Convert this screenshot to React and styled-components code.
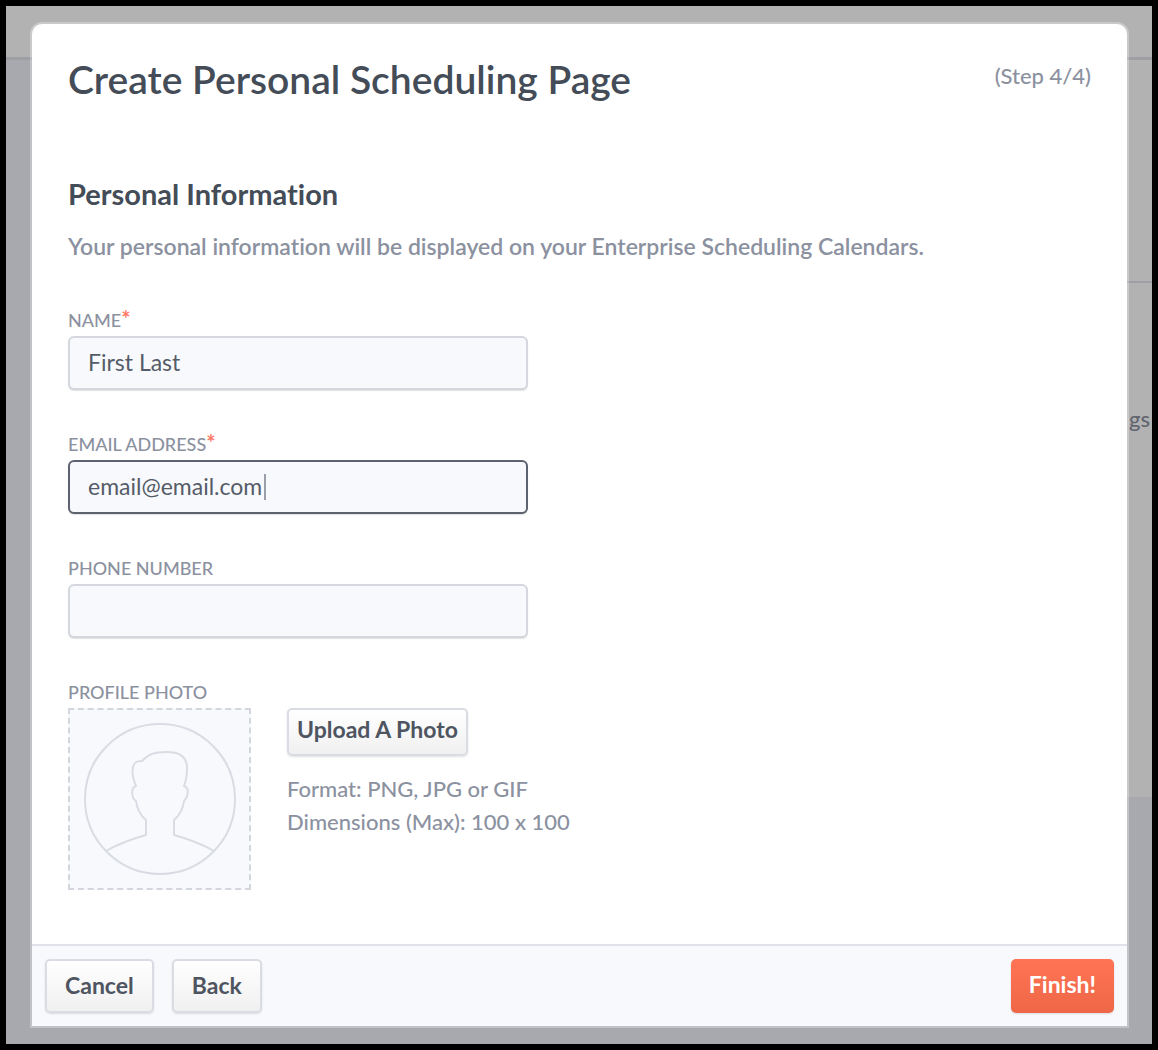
import React, { Component } from 'react';
import styled, { createGlobalStyle, css } from 'styled-components';

export default class App extends Component {
  state = {
    name: 'First Last',
    email: 'email@email.com',
    phone: ''
  };

  onChange = e => {
    const { name, value } = e.target;

    this.setState({ [name]: value });
  };

  onSubmit = e => {
    e.preventDefault();
  };

  render() {
    const { name, email, phone } = this.state;

    return (
      <Frame>
        <GlobalStyle />
        <Backdrop>
          <TopBar />
          <Columns>
            <Panel>
              <PanelHeader />
              <PanelText>gs</PanelText>
            </Panel>
          </Columns>
        </Backdrop>
        <Overlay>
          <Modal role="dialog" aria-labelledby="modal-title" onSubmit={this.onSubmit}>
            <Body>
              <Header>
                <Title id="modal-title">Create Personal Scheduling Page</Title>
                <Step>(Step 4/4)</Step>
              </Header>
              <Subtitle>Personal Information</Subtitle>
              <Lead>Your personal information will be displayed on your Enterprise Scheduling Calendars.</Lead>

              <Field>
                <Label htmlFor="name">NAME<Required>*</Required></Label>
                <Input id="name" name="name" value={name} onChange={this.onChange} />
              </Field>
              <Field>
                <Label htmlFor="email">EMAIL ADDRESS<Required>*</Required></Label>
                <InputWrap>
                  <Input id="email" name="email" value={email} onChange={this.onChange} $active />
                  <Caret />
                </InputWrap>
              </Field>
              <Field>
                <Label htmlFor="phone">PHONE NUMBER</Label>
                <Input id="phone" name="phone" value={phone} onChange={this.onChange} />
              </Field>

              <Label as="div">PROFILE PHOTO</Label>
              <Photo>
                <PhotoBox>
                  <Avatar />
                </PhotoBox>
                <div>
                  <UploadBtn type="button">Upload A Photo</UploadBtn>
                  <Hint>Format: PNG, JPG or GIF</Hint>
                  <Hint>Dimensions (Max): 100 x 100</Hint>
                </div>
              </Photo>
            </Body>
            <Footer>
              <Actions>
                <Btn type="button">Cancel</Btn>
                <Btn type="button">Back</Btn>
              </Actions>
              <PrimaryBtn type="submit">Finish!</PrimaryBtn>
            </Footer>
          </Modal>
        </Overlay>
      </Frame>
    );
  }
}

const Avatar = () => (
  <svg width="152" height="152" viewBox="0 0 152 152" fill="none" stroke="#d9dce2" strokeWidth="2" strokeLinejoin="round">
    <circle cx="76" cy="76" r="75" />
    <path d="M22 128C34 121 48 116 62 112V97C56 92 53 86 52 78C48 76 46 65 52 63C49 56 48 49 49 44C50 39 53 38 58 38C64 31 71 29 83 29C96 29 103 34 103 45C103 52 102 58 100 63C106 65 104 74 100 78C99 86 96 92 90 97V112C104 116 118 121 130 128" />
  </svg>
);

const GlobalStyle = createGlobalStyle`
  body {
    margin: 0;
    font-family: Lato, 'Liberation Sans', sans-serif;
    font-variant-ligatures: none;
    color: #434c57;
  }

  * {
    box-sizing: border-box;
  }
`;

const Frame = styled.div`
  display: grid;
  min-height: 100vh;
  border: 6px solid #000;
`;

const Backdrop = styled.div`
  display: flex;
  flex-direction: column;
  grid-area: 1 / 1;
  background: #a8a9ae;
`;

const TopBar = styled.div`
  height: 54px;
  background: #b2b2b2;
  border-bottom: 3px solid #9e9ea4;
`;

const Columns = styled.div`
  display: flex;
  justify-content: flex-end;
`;

const Panel = styled.div`
  width: 50%;
  height: 737px;
  background: #b2b2b2;
`;

const PanelHeader = styled.div`
  height: 223px;
  border-bottom: 2px solid #9e9ea4;
`;

const PanelText = styled.div`
  padding: 121px 2px 0 0;
  font-size: 22px;
  font-weight: 500;
  line-height: 30px;
  text-align: right;
  color: #62656f;
`;

const Overlay = styled.div`
  display: flex;
  grid-area: 1 / 1;
  z-index: 1;
  padding: 18px 25px 18px 26px;
`;

const Modal = styled.form`
  display: flex;
  flex-direction: column;
  flex-grow: 1;
  background: #fff;
  border-radius: 10px 10px 0 0;
  box-shadow: 0 0 0 2px rgba(255, 255, 255, 0.3);
`;

const Body = styled.div`
  flex-grow: 1;
  padding: 32px 36px;
`;

const Header = styled.div`
  display: flex;
  justify-content: space-between;
  margin-bottom: 74px;
`;

const Title = styled.h1`
  margin: 0;
  font-size: 39px;
  font-weight: 600;
  line-height: 46px;
`;

const Step = styled.div`
  font-size: 22px;
  font-weight: 500;
  line-height: 40px;
  color: #8b919f;
`;

const Subtitle = styled.h2`
  margin: 0 0 18px;
  font-size: 29px;
  font-weight: 700;
  line-height: 36px;
`;

const Lead = styled.p`
  margin: 0 0 48px;
  font-size: 23px;
  font-weight: 600;
  line-height: 32px;
  color: #8b919f;
`;

const Field = styled.div`
  width: 460px;
  max-width: 100%;
  margin-bottom: 44px;
`;

const Label = styled.label`
  display: block;
  margin-bottom: 6px;
  font-size: 18px;
  font-weight: 500;
  line-height: 20px;
  color: #8b919f;
`;

const Required = styled.span`
  font-size: 22px;
  font-weight: 700;
  line-height: 18px;
  color: #ff7a66;
`;

const InputWrap = styled.div`
  position: relative;
`;

const Input = styled.input`
  display: block;
  width: 100%;
  height: 54px;
  padding: 0 18px 2px;
  border: 2px solid #d4d8de;
  border-radius: 6px;
  outline: none;
  background: #f8f9fd;
  box-shadow: 0 1px 1px rgba(0, 0, 0, 0.12);
  font-family: inherit;
  font-size: 23px;
  color: #555c67;

  ${props => props.$active && css`
    border-color: #5c626e;
    caret-color: transparent;
  `}
`;

const Caret = styled.span`
  position: absolute;
  top: 14px;
  left: 196px;
  width: 2px;
  height: 26px;
  background: #9a9fa9;
`;

const Photo = styled.div`
  display: flex;
  gap: 36px;
`;

const PhotoBox = styled.div`
  display: flex;
  align-items: center;
  justify-content: center;
  width: 183px;
  height: 182px;
  border: 2px dashed #d3d6dc;
  background: #f8f9fd;
`;

const Btn = styled.button`
  height: 54px;
  padding: 0 18px 2px;
  border: 2px solid #d9dce2;
  border-radius: 5px;
  background: linear-gradient(#fff, #f0f0f0);
  box-shadow: 0 1px 2px rgba(0, 0, 0, 0.12);
  font-family: inherit;
  font-size: 23px;
  font-weight: 700;
  color: #4e5560;
  cursor: pointer;
`;

const UploadBtn = styled(Btn)`
  height: 48px;
  margin-bottom: 16px;
  padding: 0 8px 6px;
`;

const PrimaryBtn = styled(Btn)`
  border: none;
  padding: 0 18px 4px;
  background: linear-gradient(#ff7454, #ee6747);
  color: #fff;
`;

const Hint = styled.div`
  font-size: 22px;
  font-weight: 500;
  line-height: 33px;
  color: #8b919f;
`;

const Footer = styled.div`
  display: flex;
  justify-content: space-between;
  padding: 13px;
  border-top: 2px solid #dfe2e8;
  background: #f8f9fd;
`;

const Actions = styled.div`
  display: flex;
  gap: 18px;
`;
